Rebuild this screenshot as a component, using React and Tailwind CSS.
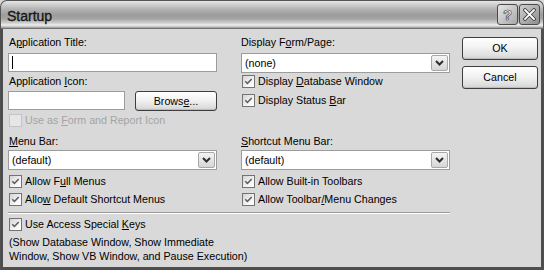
import React from 'react';

// accelerator letter, underlined like a Windows dialog
const U = ({ children }) => <span className="underline underline-offset-[1px]">{children}</span>;

function Check({ checked = true, disabled = false }) {
  return (
    <span
      className={`w-[13px] h-[13px] shrink-0 flex items-center justify-center border ${
        disabled ? 'border-[#c4c4c4] bg-[#e6e6e6]' : 'border-[#737373] bg-[linear-gradient(135deg,#d4d4d4,#f8f8f8_70%,#ffffff)]'
      }`}
    >
      {checked && (
        <svg width="9" height="9" viewBox="0 0 9 9">
          <path d="M1.3 4.3 L3.4 6.5 L7.7 2" stroke="#5a5a5a" strokeWidth="1.5" fill="none" />
        </svg>
      )}
    </span>
  );
}

function CheckRow({ children, disabled, className = '' }) {
  return (
    <div className={`flex items-center h-[13px] pl-[1px] ${className}`}>
      <Check checked={!disabled} disabled={disabled} />
      <span className={`ml-[3px] leading-[13px] whitespace-nowrap ${disabled ? 'text-[#a4a4a4]' : ''}`}>{children}</span>
    </div>
  );
}

function Select({ value, className = '' }) {
  return (
    <div className={`h-[20px] bg-white border border-[#9c9c9c] flex items-center pl-[3px] pr-[1px] ${className}`}>
      <span className="flex-1 leading-[14px]">{value}</span>
      <span className="w-[17px] h-[16px] rounded-[2px] border border-[#a8a8a8] bg-[linear-gradient(to_bottom,#f4f4f4,#d6d6d6)] flex items-center justify-center">
        <svg width="9" height="6" viewBox="0 0 9 6">
          <path d="M1 1 L4.5 4.5 L8 1" stroke="#2e2e2e" strokeWidth="2" fill="none" />
        </svg>
      </span>
    </div>
  );
}

function Button({ children, className = '' }) {
  return (
    <div
      className={`rounded-[3px] border border-[#3e3e3e] bg-[linear-gradient(to_bottom,#ffffff,#f2f2f2_45%,#dedede_85%,#cfcfcf)] shadow-[inset_0_-1px_0_#bcbcbc] flex items-center justify-center ${className}`}
    >
      {children}
    </div>
  );
}

export default function App() {
  return (
    <div className="w-[544px] h-[270px] flex flex-col bg-[#d9d9d9] text-[10.7px] text-black font-['Liberation_Sans',Arial,sans-serif] overflow-hidden">
      {/* title bar */}
      <div className="h-[29px] shrink-0 rounded-t-[7px] border border-b-0 border-[#555] bg-[linear-gradient(to_bottom,#e8e8e8_0px,#d2d2d2_3px,#b4b4b4_8px,#9c9c9c_14px,#a6a6a6_18px,#cfcfcf_22px,#efefef_24px,#bdbdbd_26px,#5a5a5a_28px)] flex items-center pl-[6px] pr-[3px]">
        <span className="text-[14px] text-[#151515] leading-none mt-[1px] [-webkit-text-stroke:0.3px_#151515]">Startup</span>
        <div className="ml-auto flex gap-[1px] mb-[2px]">
          <span className="w-[21px] h-[21px] rounded-[3px] border border-[#4a4a4a] bg-[linear-gradient(135deg,#e6e6e6,#a8a8a8)] flex items-center justify-center text-[15px] font-bold text-white [-webkit-text-stroke:0.6px_#333] leading-none">
            ?
          </span>
          <span className="w-[21px] h-[21px] rounded-[3px] border border-[#4a4a4a] bg-[linear-gradient(135deg,#cfcfcf,#8e8e8e)] flex items-center justify-center">
            <svg width="13" height="13" viewBox="0 0 13 13">
              <path d="M2 2 L11 11 M11 2 L2 11" stroke="#3a3a3a" strokeWidth="3.4" strokeLinecap="square" />
              <path d="M2 2 L11 11 M11 2 L2 11" stroke="#ffffff" strokeWidth="1.8" strokeLinecap="square" />
            </svg>
          </span>
        </div>
      </div>

      {/* body */}
      <div className="flex-1 flex border-x-[3px] border-b-[3px] border-[#4e4e4e] pt-[7px] pl-[5px] pr-[3px]">
        <div className="w-[442px] flex flex-col">
          <div className="grid grid-cols-[209px_209px] gap-x-[24px]">
            {/* left top */}
            <div className="flex flex-col">
              <div className="leading-[13px] h-[13px] pl-[1px]">A<U>p</U>plication Title:</div>
              <div className="mt-[4px] h-[19px] bg-white border border-[#9c9c9c] flex items-center pl-[3px]">
                <span className="w-[1px] h-[13px] bg-black" />
              </div>
              <div className="mt-[3px] leading-[13px] h-[13px] pl-[1px]">Application <U>I</U>con:</div>
              <div className="mt-[3px] h-[20px] flex">
                <div className="w-[117px] h-[19px] bg-white border border-[#9c9c9c]" />
                <Button className="ml-auto w-[82px] h-[20px]">
                  Brows<U>e</U>...
                </Button>
              </div>
              <CheckRow disabled className="mt-[3px]">
                Use as <U>F</U>orm and Report Icon
              </CheckRow>
            </div>
            {/* right top */}
            <div className="flex flex-col">
              <div className="leading-[13px] h-[13px]">Display F<U>o</U>rm/Page:</div>
              <Select value="(none)" className="mt-[4px]" />
              <CheckRow className="mt-[2px]">
                Display <U>D</U>atabase Window
              </CheckRow>
              <CheckRow className="mt-[6px]">
                Display Status <U>B</U>ar
              </CheckRow>
            </div>
          </div>

          <div className="grid grid-cols-[209px_209px] gap-x-[24px] mt-[8px]">
            <div className="flex flex-col">
              <div className="leading-[13px] h-[13px] pl-[1px]">
                <U>M</U>enu Bar:
              </div>
              <Select value="(default)" className="mt-[2px]" />
              <CheckRow className="mt-[5px]">
                Allow F<U>u</U>ll Menus
              </CheckRow>
              <CheckRow className="mt-[5px]">
                Allo<U>w</U> Default Shortcut Menus
              </CheckRow>
            </div>
            <div className="flex flex-col">
              <div className="leading-[13px] h-[13px]">
                <U>S</U>hortcut Menu Bar:
              </div>
              <Select value="(default)" className="mt-[2px]" />
              <CheckRow className="mt-[5px]">Allow Built-in Toolbars</CheckRow>
              <CheckRow className="mt-[5px]">
                Allow Toolbar<U>/</U>Menu Changes
              </CheckRow>
            </div>
          </div>

          <div className="mt-[6px] h-[2px] border-t border-[#9a9a9a] bg-white" />

          <CheckRow className="mt-[4px]">
            Use Access Special <U>K</U>eys
          </CheckRow>
          <p className="mt-[4px] pl-[1px] leading-[14px]">
            (Show Database Window, Show Immediate
            <br />
            Window, Show VB Window, and Pause Execution)
          </p>
        </div>

        {/* action buttons */}
        <div className="ml-[12px] w-[76px] flex flex-col gap-[6px] mt-[1px]">
          <Button className="h-[23px]">OK</Button>
          <Button className="h-[23px]">Cancel</Button>
        </div>
      </div>
    </div>
  );
}
